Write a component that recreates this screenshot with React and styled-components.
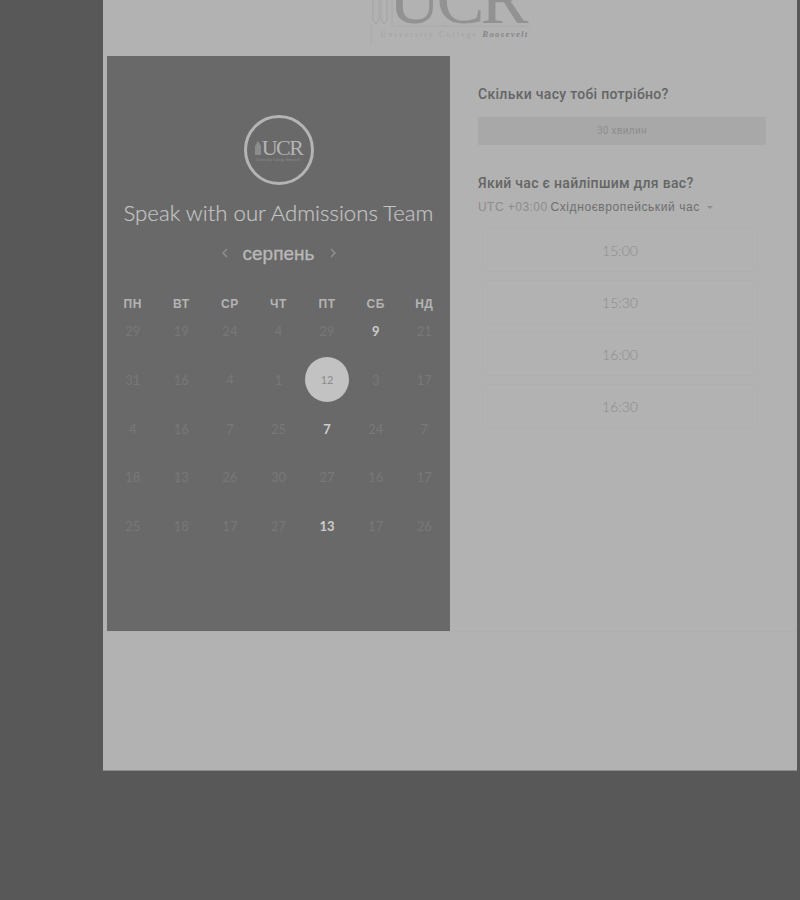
import React from "react";
import styled, { createGlobalStyle } from "styled-components";

const Global = createGlobalStyle`
html, body { margin:0; padding:0; height:100%; background:#585858; }
body { font-family:Roboto, "Liberation Sans", sans-serif; overflow:hidden; }
`
const Page = styled.div`
width:800px;
height:900px;
padding-left:103px;
padding-right:3px;
box-sizing:border-box;
`
const Card = styled.div`
height:771px;
box-sizing:border-box;
background:#b2b2b2;
border-bottom:1px solid #8a8a8a;
display:flex;
flex-direction:column;
`
const Header = styled.div`
height:56px;
display:flex;
justify-content:center;
align-items:flex-end;
overflow:hidden;
flex:none;
`
const Logo = styled.div`
display:flex;
flex-direction:column;
align-items:flex-end;
width:162px;
margin-left:-3px;
padding-bottom:16px;
position:relative;
`
const LogoMark = styled.div`
font-family:"Liberation Serif", serif;
font-size:72px;
line-height:24px;
height:24px;
color:#929292;
letter-spacing:-4px;
padding-right:5px;
`
const LogoLine = styled.div`
font-family:"Liberation Serif", serif;
font-size:8px;
line-height:10px;
letter-spacing:2.05px;
color:#a2a2a2;
white-space:nowrap;
margin-top:18px;
padding-right:1px;
i { color:#868686; letter-spacing:1.2px; font-size:9px; font-weight:bold; }
`
const LogoDrawing = styled.svg`
position:absolute;
left:0;
bottom:10px;
width:162px;
height:46px;
fill:none;
stroke:#a4a4a4;
stroke-width:1;
`
const Columns = styled.div`
display:flex;
height:575px;
padding-left:4px;
border-bottom:1px solid #aeaeae;
flex:none;
`
const Panel = styled.div`
width:343px;
background:#696969;
display:flex;
flex-direction:column;
align-items:center;
padding-top:59px;
box-sizing:border-box;
flex:none;
`
const Seal = styled.div`
width:64px;
height:64px;
border:3px solid #b4b4b4;
border-radius:50%;
display:flex;
flex-direction:column;
align-items:center;
justify-content:center;
flex:none;
`
const SealTop = styled.div`
display:flex;
align-items:flex-end;
gap:1px;
`
const SealBuilding = styled.svg`
width:6px;
height:14px;
fill:#8c8c8c;
margin-bottom:3px;
`
const SealMark = styled.div`
font-family:"Liberation Serif", serif;
font-size:22px;
line-height:20px;
letter-spacing:-1.5px;
color:#b4b4b4;
`
const SealLine = styled.div`
font-family:"Liberation Serif", serif;
font-size:3px;
line-height:5px;
letter-spacing:.3px;
color:#9a9a9a;
white-space:nowrap;
`
const Heading = styled.div`
font-family:Lato, "Open Sans", sans-serif;
font-size:22.2px;
line-height:28px;
font-weight:300;
color:#c4c4c4;
-webkit-text-stroke:.2px #c4c4c4;
margin-top:14px;
white-space:nowrap;
`
const MonthRow = styled.div`
display:flex;
align-items:center;
justify-content:center;
gap:12px;
margin-top:14px;
height:26px;
`
const Month = styled.div`
font-family:"Liberation Sans", sans-serif;
font-size:19px;
line-height:26px;
color:#b8b8b8;
-webkit-text-stroke:.3px #b8b8b8;
width:76px;
text-align:center;
white-space:nowrap;
`
const Arrow = styled.svg`
width:8px;
height:12px;
fill:none;
stroke:#8e8e8e;
stroke-width:1.5;
margin-top:-2px;
`
const Grid = styled.div`
width:100%;
display:grid;
grid-template-columns:repeat(7, 48.6px);
justify-content:center;
margin-top:24px;
`
const DayName = styled.div`
height:26px;
margin-bottom:-10px;
font-family:"Liberation Sans", sans-serif;
font-size:12px;
line-height:26px;
font-weight:bold;
letter-spacing:.5px;
color:#b4b4b4;
text-align:center;
`
const Day = styled.div`
height:48.7px;
display:flex;
align-items:center;
justify-content:center;
font-family:Lato, sans-serif;
font-size:13px;
color:${props => props.$open ? "#cccccc" : "#787878"};
font-weight:${props => props.$open ? "bold" : "normal"};
`
const Selected = styled.div`
width:44px;
height:45px;
margin-top:-2px;
border-radius:50%;
background:#c2c2c2;
color:#8c8c8c;
font-size:11px;
font-weight:normal;
display:flex;
align-items:center;
justify-content:center;
`
const Side = styled.div`
flex:1;
padding:29px 28px 0 28px;
box-sizing:border-box;
`
const Question = styled.div`
font-family:Roboto, "Liberation Sans", sans-serif;
font-size:14px;
line-height:18px;
font-weight:500;
letter-spacing:.3px;
color:#656565;
white-space:nowrap;
margin-top:${props => props.$top || 0}px;
`
const Duration = styled.div`
width:288px;
height:28px;
margin-top:14px;
background:#a8a8a8;
color:#8e8e8e;
font-size:10px;
line-height:28px;
letter-spacing:.3px;
text-align:center;
`
const Zone = styled.div`
display:flex;
align-items:center;
gap:3px;
margin-top:6px;
height:18px;
font-family:"Liberation Sans", sans-serif;
font-size:12px;
letter-spacing:.58px;
color:#6e6e6e;
white-space:nowrap;
span { color:#8c8c8c; letter-spacing:.45px; }
`
const Caret = styled.div`
width:0;
height:0;
margin-left:4px;
border-left:3px solid transparent;
border-right:3px solid transparent;
border-top:3px solid #8c8c8c;
`
const Slots = styled.div`
display:flex;
flex-direction:column;
gap:8px;
margin-top:12px;
margin-left:4px;
width:276px;
`
const Slot = styled.div`
height:44px;
box-sizing:border-box;
border:1px solid #afafaf;
border-radius:3px;
color:#8c8c8c;
font-family:Lato, sans-serif;
font-size:14px;
font-weight:300;
line-height:44px;
text-align:center;
`

const days = ["ПН", "ВТ", "СР", "ЧТ", "ПТ", "СБ", "НД"];
const weeks = [
    [29, 19, 24, 4, 29, 9, 21],
    [31, 16, 4, 1, 12, 3, 17],
    [4, 16, 7, 25, 7, 24, 7],
    [18, 13, 26, 30, 27, 16, 17],
    [25, 18, 17, 27, 13, 17, 26],
];
// row, column of the days that can be booked
const open = ["0-5", "2-4", "4-4"];
const slots = ["15:00", "15:30", "16:00", "16:30"];

export default function App() {
    return (
        <>
            <Global />
            <Page>
                <Card>
                    <Header>
                        <Logo>
                            <LogoDrawing viewBox="0 0 162 46">
                                <path d="M5 0 V20 L8 24 L11 20 V0 M13 0 V20 L16 24 L19 20 V0" />
                                <path d="M3 24 V44 M24 0 V26 H162" opacity=".6" />
                            </LogoDrawing>
                            <LogoMark>UCR</LogoMark>
                            <LogoLine>University College <i>Roosevelt</i></LogoLine>
                        </Logo>
                    </Header>
                    <Columns>
                        <Panel>
                            <Seal>
                                <SealTop>
                                    <SealBuilding viewBox="0 0 6 14"><path d="M0 14 V5 L3 0 L6 5 V14 Z" /></SealBuilding>
                                    <SealMark>UCR</SealMark>
                                </SealTop>
                                <SealLine>University College Roosevelt</SealLine>
                            </Seal>
                            <Heading>Speak with our Admissions Team</Heading>
                            <MonthRow>
                                <Arrow viewBox="0 0 8 12"><path d="M6 2 L2 6 L6 10" /></Arrow>
                                <Month>серпень</Month>
                                <Arrow viewBox="0 0 8 12"><path d="M2 2 L6 6 L2 10" /></Arrow>
                            </MonthRow>
                            <Grid>
                                {days.map(d => <DayName key={d}>{d}</DayName>)}
                                {weeks.map((week, r) => week.map((n, c) => (
                                    <Day key={`${r}-${c}`} $open={open.includes(`${r}-${c}`)}>
                                        {r === 1 && c === 4 ? <Selected>{n}</Selected> : n}
                                    </Day>
                                )))}
                            </Grid>
                        </Panel>
                        <Side>
                            <Question>Скільки часу тобі потрібно?</Question>
                            <Duration>30 хвилин</Duration>
                            <Question $top={29}>Який час є найліпшим для вас?</Question>
                            <Zone><span>UTC +03:00</span> Східноєвропейський час <Caret /></Zone>
                            <Slots>
                                {slots.map(s => <Slot key={s}>{s}</Slot>)}
                            </Slots>
                        </Side>
                    </Columns>
                </Card>
            </Page>
        </>
    );
}
